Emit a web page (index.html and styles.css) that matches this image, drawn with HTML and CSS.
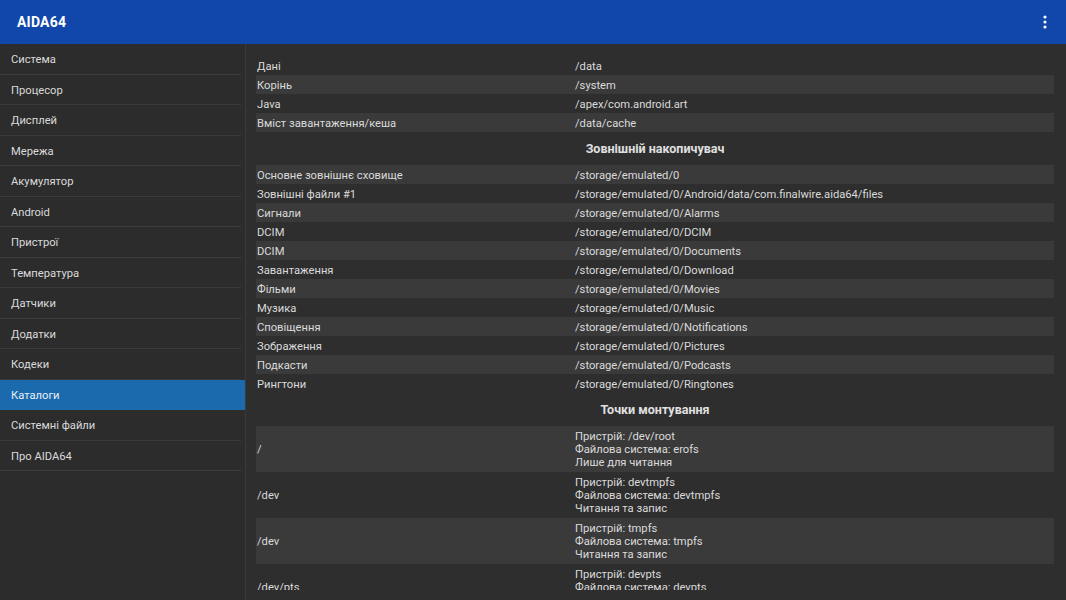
FILE: index.html
```html
<!DOCTYPE html>
<html lang="uk">
<head>
<meta charset="utf-8">
<title>AIDA64</title>
<link rel="stylesheet" href="styles.css">
</head>
<body>
<header class="appbar">
  <div class="title">AIDA64</div>
  <div class="menu" aria-label="menu">
    <svg width="4" height="14" viewBox="0 0 4 14"><circle cx="2" cy="2" r="1.6" fill="#fff"/><circle cx="2" cy="7" r="1.6" fill="#fff"/><circle cx="2" cy="12" r="1.6" fill="#fff"/></svg>
  </div>
</header>
<div class="main">
  <nav class="sidebar">
    <div class="nav-item">Система</div>
    <div class="nav-item">Процесор</div>
    <div class="nav-item">Дисплей</div>
    <div class="nav-item">Мережа</div>
    <div class="nav-item">Акумулятор</div>
    <div class="nav-item">Android</div>
    <div class="nav-item">Пристрої</div>
    <div class="nav-item">Температура</div>
    <div class="nav-item">Датчики</div>
    <div class="nav-item">Додатки</div>
    <div class="nav-item">Кодеки</div>
    <div class="nav-item active">Каталоги</div>
    <div class="nav-item">Системні файли</div>
    <div class="nav-item">Про AIDA64</div>
  </nav>
  <section class="content">
    <div class="scroll">
      <div class="row"><div class="k">Дані</div><div class="v">/data</div></div>
      <div class="row alt"><div class="k">Корінь</div><div class="v">/system</div></div>
      <div class="row"><div class="k">Java</div><div class="v">/apex/com.android.art</div></div>
      <div class="row alt"><div class="k">Вміст завантаження/кеша</div><div class="v">/data/cache</div></div>

      <div class="section">Зовнішній накопичувач</div>
      <div class="row alt"><div class="k">Основне зовнішнє сховище</div><div class="v">/storage/emulated/0</div></div>
      <div class="row"><div class="k">Зовнішні файли #1</div><div class="v">/storage/emulated/0/Android/data/com.finalwire.aida64/files</div></div>
      <div class="row alt"><div class="k">Сигнали</div><div class="v">/storage/emulated/0/Alarms</div></div>
      <div class="row"><div class="k">DCIM</div><div class="v">/storage/emulated/0/DCIM</div></div>
      <div class="row alt"><div class="k">DCIM</div><div class="v">/storage/emulated/0/Documents</div></div>
      <div class="row"><div class="k">Завантаження</div><div class="v">/storage/emulated/0/Download</div></div>
      <div class="row alt"><div class="k">Фільми</div><div class="v">/storage/emulated/0/Movies</div></div>
      <div class="row"><div class="k">Музика</div><div class="v">/storage/emulated/0/Music</div></div>
      <div class="row alt"><div class="k">Сповіщення</div><div class="v">/storage/emulated/0/Notifications</div></div>
      <div class="row"><div class="k">Зображення</div><div class="v">/storage/emulated/0/Pictures</div></div>
      <div class="row alt"><div class="k">Подкасти</div><div class="v">/storage/emulated/0/Podcasts</div></div>
      <div class="row"><div class="k">Рингтони</div><div class="v">/storage/emulated/0/Ringtones</div></div>

      <div class="section">Точки монтування</div>
      <div class="row multi alt"><div class="k">/</div><div class="v">Пристрій: /dev/root<br>Файлова система: erofs<br>Лише для читання</div></div>
      <div class="row multi"><div class="k">/dev</div><div class="v">Пристрій: devtmpfs<br>Файлова система: devtmpfs<br>Читання та запис</div></div>
      <div class="row multi alt"><div class="k">/dev</div><div class="v">Пристрій: tmpfs<br>Файлова система: tmpfs<br>Читання та запис</div></div>
      <div class="row multi"><div class="k">/dev/pts</div><div class="v">Пристрій: devpts<br>Файлова система: devpts<br>Читання та запис</div></div>
    </div>
  </section>
</div>
</body>
</html>
```

FILE: styles.css
```css
* { box-sizing: border-box; }
html, body {
  margin: 0;
  padding: 0;
  width: 1066px;
  height: 600px;
  overflow: hidden;
  background: #2e2e2e;
  font-family: Roboto, "Noto Sans", "Liberation Sans", sans-serif;
  color: #dcdcdc;
}
.appbar {
  height: 44px;
  background: #1147aa;
  display: flex;
  align-items: center;
  justify-content: space-between;
  padding: 0 19px 0 17px;
}
.title {
  color: #fff;
  font-weight: 700;
  font-size: 14px;
  letter-spacing: 0.2px;
}
.menu {
  display: flex;
  align-items: center;
  height: 14px;
}
.menu svg { display: block; }
.main {
  display: flex;
  height: 556px;
}
.sidebar {
  width: 246px;
  flex: none;
  background: #2c2c2c;
  border-right: 1px solid #3a3a3a;
  padding-right: 4px;
  display: flex;
  flex-direction: column;
}
.nav-item {
  height: 30.5px;
  display: flex;
  align-items: center;
  padding: 2px 0 0 11px;
  font-size: 11.2px;
  color: #dadada;
  border-bottom: 1px solid #3b3b3b;
}
.nav-item.active {
  background: #1a6aad;
  color: #e8eef6;
  border-bottom-color: #1a6aad;
  margin-right: -4px;
}
.content {
  flex: 1;
  background: #2e2e2e;
  padding: 12px 12px 10px 10px;
  display: flex;
  flex-direction: column;
}
.scroll {
  flex: 1;
  overflow: hidden;
}
.row {
  display: grid;
  grid-template-columns: 319px 1fr;
  min-height: 19px;
  align-items: center;
  font-size: 11.2px;
  line-height: 13px;
  color: #dadada;
}
.row .k, .row .v { padding-top: 1px; }
.row.alt { background: #3a3a3a; }
.row .k { padding-left: 1px; }
.row.multi {
  height: 46px;
}
.row.multi .v { line-height: 13px; }
.section {
  height: 33px;
  display: flex;
  align-items: center;
  justify-content: center;
  font-weight: 700;
  font-size: 12.5px;
  color: #e0e0e0;
}
```
